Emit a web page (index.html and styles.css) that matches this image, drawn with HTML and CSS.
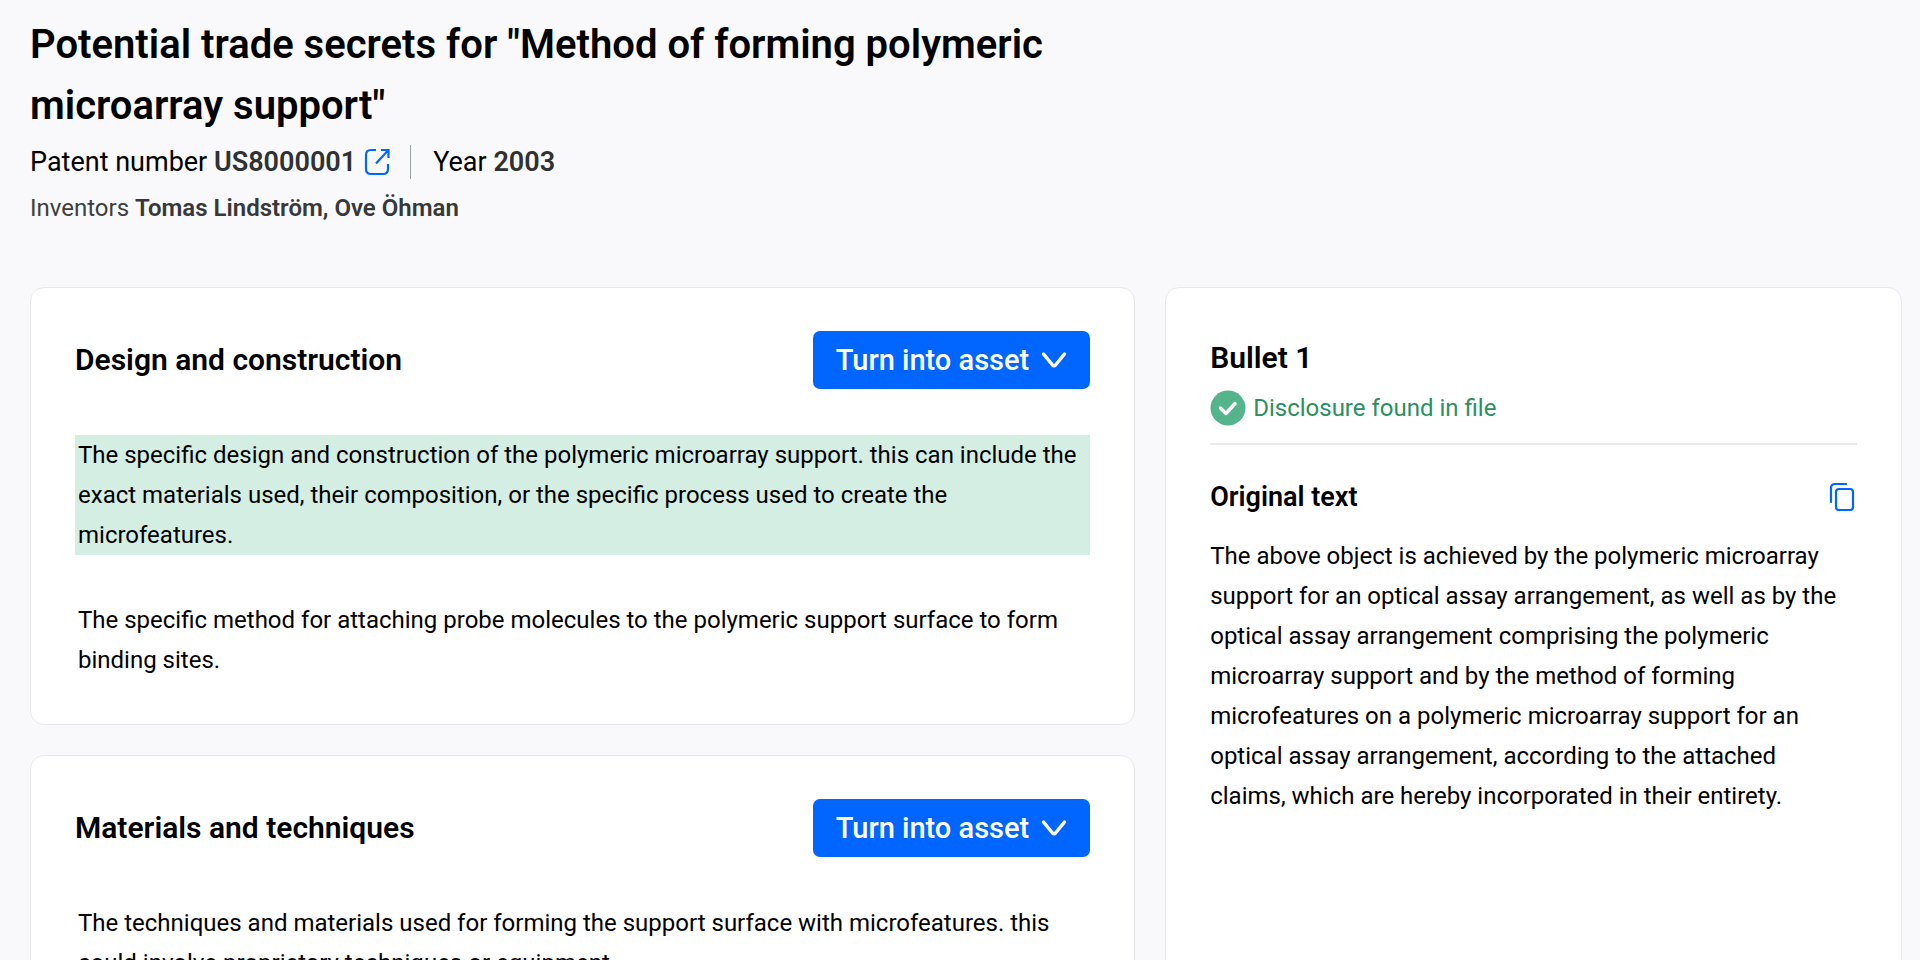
FILE: index.html
```html
<!DOCTYPE html>
<html lang="en">
<head>
<meta charset="utf-8">
<title>Potential trade secrets</title>
<link rel="stylesheet" href="styles.css">
</head>
<body>
<header class="page-header">
  <h1 class="page-title">Potential trade secrets for "Method of forming polymeric microarray support"</h1>
  <div class="meta">
    <span>Patent number <strong class="value">US8000001</strong></span>
    <a class="external" href="#" aria-label="Open patent">
      <svg width="26" height="28" viewBox="0 0 26 28" fill="none" stroke="currentColor" stroke-width="2.200">
        <path d="M12 2H7Q2 2 2 7V21Q2 26 7 26H19Q24 26 24 21V16M12 15.500 24 2.500M17 2H24.500V10"/>
      </svg>
    </a>
    <span class="divider"></span>
    <span>Year <strong class="value">2003</strong></span>
  </div>
  <p class="inventors">Inventors <strong class="names">Tomas Lindström, Ove Öhman</strong></p>
</header>
<main class="columns">
  <div class="sections">
    <section class="card">
      <div class="card-head">
        <h2 class="card-title">Design and construction</h2>
        <button class="asset-button" type="button">Turn into asset
          <svg width="26" height="18" viewBox="0 0 26 18" fill="none" stroke="currentColor" stroke-width="3.500" stroke-linecap="round" stroke-linejoin="round"><path d="M2.500 3 11.500 14Q13 15.500 14.500 14L23.500 3"/></svg>
        </button>
      </div>
      <p class="bullet bullet-found">The specific design and construction of the polymeric microarray support. this can include the exact materials used, their composition, or the specific process used to create the microfeatures.</p>
      <p class="bullet">The specific method for attaching probe molecules to the polymeric support surface to form binding sites.</p>
    </section>
    <section class="card">
      <div class="card-head">
        <h2 class="card-title">Materials and techniques</h2>
        <button class="asset-button" type="button">Turn into asset
          <svg width="26" height="18" viewBox="0 0 26 18" fill="none" stroke="currentColor" stroke-width="3.500" stroke-linecap="round" stroke-linejoin="round"><path d="M2.500 3 11.500 14Q13 15.500 14.500 14L23.500 3"/></svg>
        </button>
      </div>
      <p class="bullet">The techniques and materials used for forming the support surface with microfeatures. this could involve proprietary techniques or equipment.</p>
    </section>
  </div>
  <aside class="card detail">
    <h2 class="detail-title">Bullet 1</h2>
    <p class="status">
      <svg width="36" height="36" viewBox="0 0 36 36" fill="none"><circle cx="18" cy="18" r="17.500" fill="#54b58d"/><path d="M10.500 18 16 23.500 25 13.500" stroke="#fff" stroke-width="3.500" stroke-linecap="round" stroke-linejoin="round"/></svg>
      Disclosure found in file
    </p>
    <div class="original-head">
      <h3 class="original-title">Original text</h3>
      <button class="copy" type="button" aria-label="Copy text">
        <svg width="26" height="30" viewBox="0 0 26 30" fill="none" stroke="currentColor" stroke-width="2.200" stroke-linecap="round"><path d="M2 20V6Q2 2 6 2H17"/><rect x="7" y="7" width="17" height="21" rx="3"/></svg>
      </button>
    </div>
    <p class="original-text">The above object is achieved by the polymeric microarray support for an optical assay arrangement, as well as by the optical assay arrangement comprising the polymeric microarray support and by the method of forming microfeatures on a polymeric microarray support for an optical assay arrangement, according to the attached claims, which are hereby incorporated in their entirety.</p>
  </aside>
</main>
</body>
</html>
```
FILE: styles.css
```css
* { box-sizing: border-box; }
html, body { height: 100%; }
body {
  margin: 0;
  padding: 14px 18px 0 30px;
  display: flex;
  flex-direction: column;
  overflow: hidden;
  background: #f9f9fb;
  color: #000;
  font-family: Roboto, "Liberation Sans", sans-serif;
  font-size: 24px;
  line-height: 40px;
}
h1, h2, h3, p { margin: 0; }
.page-header { flex: none; max-width: 1060px; }
.page-title { font-size: 40px; line-height: 61px; font-weight: 600; }
.meta { display: flex; align-items: center; height: 52px; font-size: 27px; }
.value { font-weight: 600; color: #2f3133; }
.external { display: flex; margin-left: 8px; color: #0066ff; }
.divider { width: 1px; height: 34px; margin: 0 22px 0 20px; background: #9aa3a0; }
.inventors { color: #3c3e40; }
.names { font-weight: 600; color: #363839; }
.columns {
  flex: 1 0 auto;
  display: grid;
  grid-template-columns: 3fr 2fr;
  gap: 30px;
  margin-top: 59px;
}
.sections { display: flex; flex-direction: column; gap: 30px; }
.card {
  padding: 43px 44px 44px;
  border: 1px solid #e6e8eb;
  border-radius: 14px;
  background: #fff;
}
.card-head { display: flex; align-items: center; justify-content: space-between; margin-bottom: 46px; }
.card-title { font-size: 30px; font-weight: 600; }
.asset-button {
  display: flex;
  align-items: center;
  gap: 12px;
  height: 58px;
  padding: 0 23px;
  border: 0;
  border-radius: 7px;
  background: #0066ff;
  color: #fff;
  font: 500 29px/40px Roboto, "Liberation Sans", sans-serif;
}
.bullet { padding: 0 3px; }
.bullet + .bullet { margin-top: 45px; }
.bullet-found { background: #d5eee3; }
.detail { min-height: 672px; }
.detail-title { padding-top: 7px; font-size: 30px; font-weight: 600; }
.status {
  display: flex;
  align-items: center;
  gap: 7px;
  padding: 10px 0 15px;
  border-bottom: 2px solid #e9eaeb;
  color: #2b8f62;
}
.original-head { display: flex; align-items: center; justify-content: space-between; margin: 32px 0 19px; }
.original-title { font-size: 27px; font-weight: 600; }
.copy { display: flex; padding: 0 2px 0 0; border: 0; background: none; color: #0066ff; }
```
